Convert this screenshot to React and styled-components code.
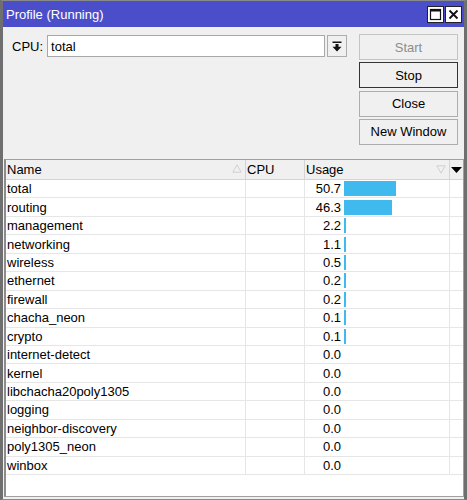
import React from 'react';
import styled, { createGlobalStyle } from 'styled-components';

const GlobalStyle = createGlobalStyle`
    html, body {
        margin: 0;
        padding: 0;
        background: #f0f0f0;
    }
    * {
        box-sizing: border-box;
    }
`;

const rows = [
    ['total', 50.7],
    ['routing', 46.3],
    ['management', 2.2],
    ['networking', 1.1],
    ['wireless', 0.5],
    ['ethernet', 0.2],
    ['firewall', 0.2],
    ['chacha_neon', 0.1],
    ['crypto', 0.1],
    ['internet-detect', 0.0],
    ['kernel', 0.0],
    ['libchacha20poly1305', 0.0],
    ['logging', 0.0],
    ['neighbor-discovery', 0.0],
    ['poly1305_neon', 0.0],
    ['winbox', 0.0],
];

// styled-components

const Window = styled.div`
    width: 467px;
    height: 500px;
    display: flex;
    flex-direction: column;
    background: #f0f0f0;
    border: 1px solid #8a8a8a;
    border-left: 3px solid #6f6f6f;
    border-right: 3px solid #6f6f6f;
    font-family: "Liberation Sans", Arial, sans-serif;
    font-size: 13px;
    color: #000;
    overflow: hidden;
`;

const TitleBar = styled.div`
    height: 26px;
    flex-shrink: 0;
    display: flex;
    align-items: center;
    justify-content: space-between;
    background: #4b4ecb;
    color: #fff;
    padding: 0 1px 0 6px;
    margin: 0 -3px 0 -3px;
    font-size: 13px;
`;

const TitleButtons = styled.div`
    display: flex;
    gap: 1px;
    padding-right: 4px;
`;

const TitleButton = styled.div`
    width: 17px;
    height: 17px;
    background: #fff;
    border: 1px solid #222;
    display: flex;
    align-items: center;
    justify-content: center;
`;

const Body = styled.div`
    flex: 1;
    display: flex;
    flex-direction: column;
    padding: 7px 0 2px 1px;
`;

const Top = styled.div`
    display: flex;
    justify-content: space-between;
    padding: 0 6px 0 8px;
    height: 125px;
`;

const CpuRow = styled.div`
    display: flex;
    align-items: center;
    height: 22px;
    margin-top: 1px;
`;

const Label = styled.span`
    margin-right: 4px;
`;

const Input = styled.div`
    width: 278px;
    height: 22px;
    background: #fff;
    border: 1px solid #a8a8a8;
    padding: 0 3px;
    display: flex;
    align-items: center;
`;

const DropButton = styled.div`
    width: 20px;
    height: 22px;
    margin-left: 2px;
    border: 1px solid #adadad;
    background: #f0f0f0;
    display: flex;
    align-items: center;
    justify-content: center;
`;

const ButtonColumn = styled.div`
    display: flex;
    flex-direction: column;
    gap: 2.3px;
`;

const Button = styled.div`
    width: 99px;
    height: 26px;
    display: flex;
    align-items: center;
    justify-content: center;
    background: #f0f0f0;
    border: 1px solid ${p => (p.$focused ? '#333' : p.$disabled ? '#c4c4c4' : '#adadad')};
    color: ${p => (p.$disabled ? '#8d8d8d' : '#000')};
`;

const Table = styled.div`
    flex: 1;
    border: 1px solid #a0a0a0;
    border-left: 2px solid #8c8c8c;
    background: #fff;
    display: flex;
    flex-direction: column;
`;

const cols = '240px 59px 145px 1fr';

const HeaderRow = styled.div`
    display: grid;
    grid-template-columns: ${cols};
    height: 20px;
    background: #f0f0f0;
    border-bottom: 1px solid #d4d4d4;
`;

const HeaderCell = styled.div`
    position: relative;
    display: flex;
    align-items: center;
    padding-left: 1px;
    border-right: 1px solid #d4d4d4;
    &:last-child {
        border-right: none;
        justify-content: center;
        padding-left: 0;
    }
`;

const SortMark = styled.svg`
    position: absolute;
    right: 3px;
    top: ${p => p.$top}px;
`;

const Row = styled.div`
    display: grid;
    grid-template-columns: ${cols};
    height: 18.45px;
    border-bottom: 1px solid #e6e6e6;
`;

const Cell = styled.div`
    display: flex;
    align-items: center;
    padding-left: 1px;
    border-right: 1px solid #e6e6e6;
    white-space: nowrap;
    overflow: hidden;
    &:last-child {
        border-right: none;
    }
`;

const UsageCell = styled(Cell)`
    padding-left: 0;
`;

const Value = styled.span`
    width: 36px;
    text-align: right;
    margin-right: 3px;
`;

const Bar = styled.div`
    height: 15px;
    background: #40b9ef;
`;

const MaxIcon = () => (
    <svg width="13" height="13" viewBox="0 0 13 13">
        <rect x="1.5" y="1.5" width="10" height="10" fill="none" stroke="#111" strokeWidth="1.2" />
        <rect x="1.5" y="1.5" width="10" height="2" fill="#111" />
    </svg>
);

const CloseIcon = () => (
    <svg width="13" height="13" viewBox="0 0 13 13">
        <path d="M2.5 2.5 L10.5 10.5 M10.5 2.5 L2.5 10.5" stroke="#111" strokeWidth="1.8" />
    </svg>
);

const DownIcon = () => (
    <svg width="10" height="11" viewBox="0 0 10 11">
        <rect x="0.5" y="0.5" width="9" height="1.5" fill="#111" />
        <rect x="3.5" y="3" width="3" height="3" fill="#111" />
        <path d="M0.5 5.8 H9.5 L5 10.5 Z" fill="#111" />
    </svg>
);

const App = () => {
    return (
        <>
            <GlobalStyle />
            <Window>
                <TitleBar>
                    <span>Profile (Running)</span>
                    <TitleButtons>
                        <TitleButton><MaxIcon /></TitleButton>
                        <TitleButton><CloseIcon /></TitleButton>
                    </TitleButtons>
                </TitleBar>
                <Body>
                    <Top>
                        <CpuRow>
                            <Label>CPU:</Label>
                            <Input>total</Input>
                            <DropButton><DownIcon /></DropButton>
                        </CpuRow>
                        <ButtonColumn>
                            <Button $disabled>Start</Button>
                            <Button $focused>Stop</Button>
                            <Button>Close</Button>
                            <Button>New Window</Button>
                        </ButtonColumn>
                    </Top>
                    <Table>
                        <HeaderRow>
                            <HeaderCell>
                                Name
                                <SortMark $top={4} width="10" height="9" viewBox="0 0 10 9">
                                    <path d="M5 0.8 L9.2 8.2 H0.8 Z" fill="none" stroke="#d0d0d0" />
                                </SortMark>
                            </HeaderCell>
                            <HeaderCell>CPU</HeaderCell>
                            <HeaderCell>
                                Usage
                                <SortMark $top={5} width="10" height="9" viewBox="0 0 10 9">
                                    <path d="M0.8 0.8 H9.2 L5 8.2 Z" fill="none" stroke="#d0d0d0" />
                                </SortMark>
                            </HeaderCell>
                            <HeaderCell>
                                <svg width="11" height="6" viewBox="0 0 11 6">
                                    <path d="M0 0 H11 L5.5 6 Z" fill="#000" />
                                </svg>
                            </HeaderCell>
                        </HeaderRow>
                        {rows.map(([name, usage]) => (
                            <Row key={name}>
                                <Cell>{name}</Cell>
                                <Cell />
                                <UsageCell>
                                    <Value>{usage.toFixed(1)}</Value>
                                    {usage > 0 && (
                                        <Bar style={{ width: Math.max(2, Math.round(usage * 1.03)) }} />
                                    )}
                                </UsageCell>
                                <Cell />
                            </Row>
                        ))}
                    </Table>
                </Body>
            </Window>
        </>
    );
};

export default App;
